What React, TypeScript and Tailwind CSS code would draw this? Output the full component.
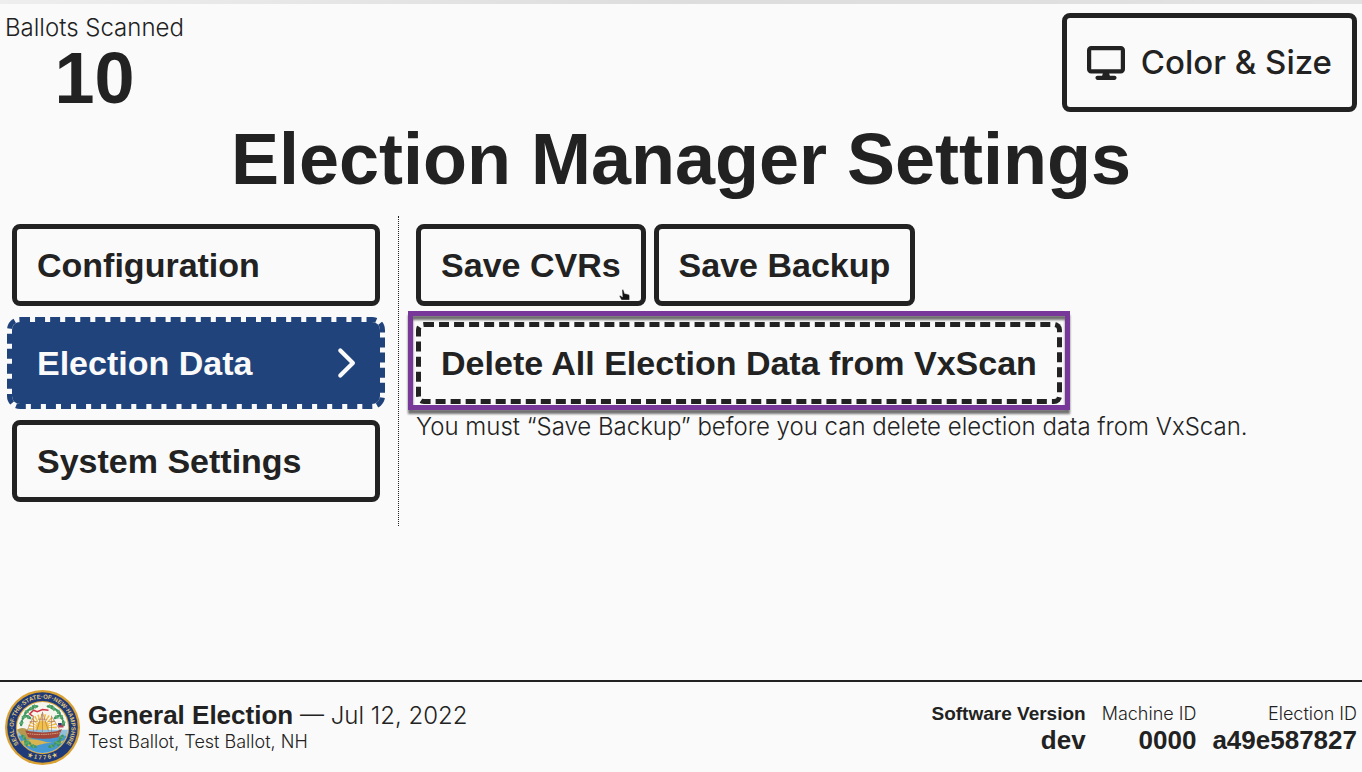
import { FaChevronRight, FaDisplay } from 'react-icons/fa6';

const lightText = 'font-[Inter,sans-serif] font-light';

function StateSeal() {
  const rays = Array.from({ length: 13 }, (_, i) => 180 + i * 15);
  const leaves = [
    [29, 29, -45], [35, 25, -20], [25, 36, -60], [22, 44, -80], [40, 22, 0], [31, 36, 30],
    [71, 29, 45], [65, 25, 20], [75, 36, 60], [78, 44, 80], [60, 22, 0], [69, 36, -30],
    [25, 63, 50], [31, 70, 30], [38, 75, 15], [28, 71, 70], [75, 63, -50], [69, 70, -30],
    [62, 75, -15], [72, 71, -70],
  ];
  return (
    <svg className="size-[75px] shrink-0" viewBox="0 0 100 100" role="img" aria-label="State seal">
      <defs>
        <path id="sealTop" d="M 23 77.500 A 38.500 38.500 0 1 1 77 77.500" />
        <path id="sealBottom" d="M 24 84 A 43 43 0 0 0 76 84" />
        <clipPath id="sealCenter">
          <circle cx="50" cy="50" r="34" />
        </clipPath>
      </defs>
      <circle cx="50" cy="50" r="50" fill="#d9a032" />
      <circle cx="50" cy="50" r="47" fill="#1f3a78" />
      <circle cx="50" cy="50" r="35.500" fill="#dba63a" />
      <g clipPath="url(#sealCenter)">
        <rect x="14" y="14" width="72" height="72" fill="#f7f6ee" />
        <circle cx="50" cy="50" r="9" fill="#f3c44b" />
        {rays.map((a) => (
          <path key={a} d="M50 50 L69 48.800 L69 51.200 Z" fill="#f0bd45" transform={`rotate(${a} 50 51)`} />
        ))}
        <rect x="14" y="53" width="72" height="9" fill="#8fc0dc" />
        <rect x="14" y="61" width="72" height="28" fill="#4598d3" />
        <path d="M16 53 Q24 48 31 54 L36 66 L25 65 Z" fill="#b8974e" />
        <path d="M22 68 Q36 63 50 68 T79 67 L76 71 Q58 69 46 73 T24 73 Z" fill="#d8b552" />
        <path d="M27 54 L31 63 Q50 67 71 63 L76 52 L69 55 Q50 58 33 55 Z" fill="#a34639" />
        <path d="M30 58 Q50 61 73 57" stroke="#f1d0a0" strokeWidth="1" fill="none" strokeDasharray="2 1" />
        <path
          d="M38 56 V34 M50 57 V29 M62 56 V34 M33 42 H43 M44 39 H56 M57 42 H67 M38 35 L29 55 M50 30 L42 55 M50 30 L58 55 M62 35 L73 53"
          stroke="#a8715f"
          strokeWidth="0.800"
          fill="none"
        />
        <path d="M58 27 L50 26 L43 29 L38 27 L33 32 L37 35" stroke="#cf3545" strokeWidth="2" fill="none" />
        <path d="M71 44 h7 v6 h-7 Z" fill="#b84456" />
        <path d="M71 44 h4 v3 h-4 Z" fill="#273e82" />
        {leaves.map(([x, y, r], i) => (
          <g key={i} transform={`translate(${x} ${y}) rotate(${r})`}>
            <ellipse rx="4.500" ry="1.900" fill="#3e9460" />
            <ellipse rx="3.200" ry="1.200" transform="rotate(70)" fill="#5aab70" />
          </g>
        ))}
      </g>
      <g fill="#e2c878" fontFamily="Liberation Sans, sans-serif" fontWeight="700" fontSize="8">
        <text>
          <textPath href="#sealTop" startOffset="50%" textAnchor="middle">
            SEAL·OF·THE·STATE·OF·NEW·HAMPSHIRE
          </textPath>
        </text>
        <text>
          <textPath href="#sealBottom" startOffset="50%" textAnchor="middle">
            ★ 1 7 7 6 ★
          </textPath>
        </text>
      </g>
    </svg>
  );
}

function NavButton({ label, active = false }: { label: string; active?: boolean }) {
  return (
    <button
      type="button"
      aria-current={active ? 'page' : undefined}
      className={
        active
          ? 'flex h-[82px] items-center justify-between rounded-lg bg-[#20437c] px-[25px] text-left text-[34px] font-bold text-[#fafafa] outline-[5px] outline-dashed outline-[#20437c]'
          : 'flex h-[82px] items-center justify-between rounded-lg border-[5px] border-[#222222] px-5 text-left text-[34px] font-bold'
      }
    >
      {label}
      {active && <FaChevronRight className="h-[34px] w-[21px]" />}
    </button>
  );
}

function ActionButton({ label, dashed = false }: { label: string; dashed?: boolean }) {
  return (
    <button
      type="button"
      className={
        dashed
          ? 'h-[82px] rounded-lg border-[5px] border-dashed border-[#222222] px-5 text-[34px] font-bold whitespace-nowrap'
          : 'h-[82px] rounded-lg border-[5px] border-[#222222] px-5 text-[34px] font-bold whitespace-nowrap'
      }
    >
      {label}
    </button>
  );
}

function Pointer() {
  return (
    <svg className="absolute right-4 bottom-[5px] h-3 w-[11px]" viewBox="0 0 11 12" aria-hidden="true">
      <path
        d="M3 1 q1 -1 1.500 0 L5.500 4.500 L10 5.500 L10.500 7 V11 H2.500 L0.500 7.500 Q0.500 6 2 7 L3.500 8 Z"
        fill="#111"
        stroke="#ddd"
        strokeWidth="0.400"
      />
    </svg>
  );
}

function InfoItem({ label, value, strong = false }: { label: string; value: string; strong?: boolean }) {
  return (
    <div className="flex flex-col items-end">
      <dt className={strong ? 'text-[19px] leading-6 font-bold' : 'font-[Inter,sans-serif] text-[18px] leading-6 font-light'}>
        {label}
      </dt>
      <dd className="text-[26px] leading-7 font-bold">{value}</dd>
    </div>
  );
}

export default function App() {
  return (
    <div className="flex min-h-screen flex-col bg-[#fafafa] font-['Liberation_Sans',Arial,sans-serif] text-[#222222]">
      <div className="h-1 bg-gradient-to-r from-[#eeeeee] via-[#dddddd] to-[#e2e2e2]" />
      <header className="flex items-start justify-between px-[5px] pt-[9px]">
        <div className="flex flex-col items-center">
          <span className={`${lightText} text-[24px] leading-[30px]`}>Ballots Scanned</span>
          <strong className="text-[72px] leading-[70px] font-bold">10</strong>
        </div>
        <button
          type="button"
          className="flex h-[99px] items-center gap-4 rounded-lg border-[5px] border-[#222222] px-5 font-[Inter,sans-serif] text-[33px] font-medium"
        >
          <FaDisplay className="h-[34px] w-[38px]" />
          Color &amp; Size
        </button>
      </header>

      <h1 className="pt-2 text-center text-[72px] leading-[76px] font-bold">Election Manager Settings</h1>

      <main className="mt-[19px] flex">
        <nav className="flex w-[29.3%] shrink-0 flex-col gap-4 border-r border-dotted border-[#222222] pt-2 pr-[18px] pb-6 pl-3">
          <NavButton label="Configuration" />
          <NavButton label="Election Data" active />
          <NavButton label="System Settings" />
        </nav>
        <section className="flex flex-col items-start gap-4 pt-2 pl-[17px]">
          <div className="flex gap-2">
            <div className="relative">
              <ActionButton label="Save CVRs" />
              <Pointer />
            </div>
            <ActionButton label="Save Backup" />
          </div>
          <div>
            <div className="relative w-fit">
              <ActionButton label="Delete All Election Data from VxScan" dashed />
              <div className="pointer-events-none absolute -inset-x-2 -top-[11px] -bottom-[6px] border-[5px] border-[#78389a] drop-shadow-[0_4px_1px_rgba(0,0,0,0.55)]" />
            </div>
            <p className={`${lightText} mt-[7px] text-[24px] leading-8`}>
              You must “Save Backup” before you can delete election data from VxScan.
            </p>
          </div>
        </section>
      </main>

      <footer className="mt-auto flex items-center justify-between border-t-2 border-[#222222] px-[5px] pt-2 pb-[7px]">
        <div className="flex items-center gap-2">
          <StateSeal />
          <div>
            <div className="text-[26px] leading-7">
              <strong className="font-bold">General Election</strong>
              <span className={`${lightText} text-[24px]`}> — Jul 12, 2022</span>
            </div>
            <div className={`${lightText} text-[18px] leading-6`}>Test Ballot, Test Ballot, NH</div>
          </div>
        </div>
        <dl className="flex gap-4">
          <InfoItem label="Software Version" value="dev" strong />
          <InfoItem label="Machine ID" value="0000" />
          <InfoItem label="Election ID" value="a49e587827" />
        </dl>
      </footer>
    </div>
  );
}
